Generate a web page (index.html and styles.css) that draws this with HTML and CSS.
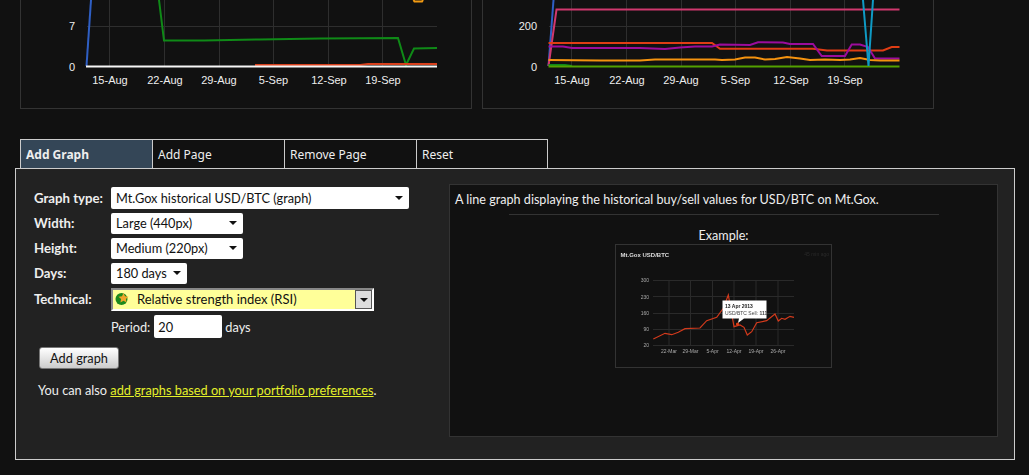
FILE: index.html
```html
<!DOCTYPE html>
<html lang="en">
<head>
    <meta charset="UTF-8">
    <title>Add Graph</title>
    <link rel="stylesheet" href="styles.css">
</head>
<body>
    <section class="graphs">
        <div class="graph">
            <svg viewBox="21 0 450 108" width="450" height="108">
                <g class="grid">
                    <path d="M87 26.5H437"/>
                    <path d="M109.5 0V66M164.5 0V66M219.5 0V66M273.5 0V66M328.5 0V66M382.5 0V66"/>
                </g>
                <path class="line" stroke="#2f5fc4" d="M86.5 66L91 0"/>
                <path class="line" stroke="#0f8a17" d="M159 0L164 40.5L204 40.5L260 39.5L320 38.5L398 38L406 65L414 48.5L437 48"/>
                <path class="line" stroke="#d8401c" d="M255 65H360L368 64H437"/>
                <path class="line" stroke="#f7f7f7" d="M86 66.5H437"/>
                <path class="line" stroke="#f29a12" d="M413.5 0L414.5 1.5H422L423 0"/>
                <g class="ticks">
                    <text x="72" y="30" text-anchor="middle">7</text>
                    <text x="72" y="71" text-anchor="middle">0</text>
                    <text x="110" y="84" text-anchor="middle">15-Aug</text>
                    <text x="165" y="84" text-anchor="middle">22-Aug</text>
                    <text x="219" y="84" text-anchor="middle">29-Aug</text>
                    <text x="273.5" y="84" text-anchor="middle">5-Sep</text>
                    <text x="329" y="84" text-anchor="middle">12-Sep</text>
                    <text x="383" y="84" text-anchor="middle">19-Sep</text>
                </g>
            </svg>
        </div>
        <div class="graph">
            <svg viewBox="483 0 450 108" width="450" height="108">
                <g class="grid">
                    <path d="M549 26.5H900"/>
                    <path d="M571.5 0V66M626.5 0V66M681.5 0V66M735.5 0V66M790.5 0V66M844.5 0V66"/>
                </g>
                <path class="line" stroke="#2f5fc4" d="M548.5 66L553.5 0"/>
                <path class="line" stroke="#d0386e" d="M548.5 66L556.5 9.5H899.5"/>
                <path class="line" stroke="#e03d14" d="M548.5 43H712L720 48.7H813L827 50.5H883L891.7 47H899.5"/>
                <path class="line" stroke="#9c0c9c" d="M548.5 46.5H563L572 48H640L665 49L680 47.5L695 46.5H712L720 44.5L750 45L758 42.3L783 42.5L790 44H813L821.7 56H845L851.7 44.5H860L868 47L875 58.5H899.5"/>
                <path class="line" stroke="#f5930f" d="M548.5 60L600 60.5H640L655 59.5H715L722 60L735 59.5L745 57.5H755L765 59.5L775 59L787 57L800 58.5L810 60L825 59.5L840 60L850 59.5L860 58L870 60L880 60.5H899.5"/>
                <path class="line" stroke="#0f8a17" d="M548.5 65H565L572 66"/>
                <path class="line" stroke="#53a000" d="M548.5 66.5H899.5"/>
                <path class="line" stroke="#0f9ac4" d="M863 0L868.5 66L873 0"/>
                <g class="ticks">
                    <text x="537" y="30" text-anchor="end">200</text>
                    <text x="537" y="71" text-anchor="end">0</text>
                    <text x="572" y="84" text-anchor="middle">15-Aug</text>
                    <text x="627" y="84" text-anchor="middle">22-Aug</text>
                    <text x="681" y="84" text-anchor="middle">29-Aug</text>
                    <text x="735.5" y="84" text-anchor="middle">5-Sep</text>
                    <text x="791" y="84" text-anchor="middle">12-Sep</text>
                    <text x="845" y="84" text-anchor="middle">19-Sep</text>
                </g>
            </svg>
        </div>
    </section>

    <nav class="tabs">
        <a class="tab tab-active" href="#">Add Graph</a>
        <a class="tab" href="#">Add Page</a>
        <a class="tab" href="#">Remove Page</a>
        <a class="tab tab-last" href="#">Reset</a>
    </nav>

    <section class="panel">
        <form class="graph-form">
            <div class="row row-first">
                <label class="row-label">Graph type:</label>
                <div class="select select-type">Mt.Gox historical USD/BTC (graph)</div>
            </div>
            <div class="row row-lift">
                <label class="row-label">Width:</label>
                <div class="select select-size">Large (440px)</div>
            </div>
            <div class="row row-lift">
                <label class="row-label">Height:</label>
                <div class="select select-size">Medium (220px)</div>
            </div>
            <div class="row row-lift">
                <label class="row-label">Days:</label>
                <div class="select select-days">180 days</div>
            </div>
            <div class="row row-tall row-lift">
                <label class="row-label">Technical:</label>
                <div class="combo">
                    <svg class="combo-icon" viewBox="0 0 14 14" width="14" height="14">
                        <circle cx="6.5" cy="7" r="6" fill="#1c8a1c"/>
                        <path d="M8.5 1L10 4.3L13.5 4.7L10.9 7L11.6 10.5L8.5 8.7L5.4 10.5L6.1 7L3.5 4.7L7 4.3Z" fill="#f0a52a"/>
                    </svg>
                    <span class="combo-text">Relative strength index (RSI)</span>
                    <span class="combo-button"></span>
                </div>
            </div>
            <div class="row row-tall row-period">
                <span class="period-label">Period:</span>
                <input class="period-input" type="text" value="20">
                <span>days</span>
            </div>
            <button class="add-button" type="button">Add graph</button>
            <p class="form-note">You can also <a href="#">add graphs based on your portfolio preferences</a>.</p>
        </form>

        <aside class="preview">
            <p class="preview-text">A line graph displaying the historical buy/sell values for USD/BTC on Mt.Gox.</p>
            <hr class="preview-rule">
            <p class="preview-label">Example:</p>
            <svg class="preview-graph" viewBox="615 244 217 124" width="217" height="124">
                <rect x="615.5" y="244.5" width="216" height="123" fill="#111" stroke="#333"/>
                <text class="thumb-title" x="620.5" y="257">Mt.Gox USD/BTC</text>
                <text class="thumb-age" x="829" y="256" text-anchor="end">45 min ago</text>
                <path class="thumb-grid" d="M653 280.5H794M653 296.5H794M653 313.5H794M653 329.5H794M653 345.5H794M669 280V346M690.5 280V346M712.5 280V346M734 280V346M756 280V346M778 280V346"/>
                <g class="thumb-ticks">
                    <text x="649" y="282" text-anchor="end">300</text>
                    <text x="649" y="299" text-anchor="end">230</text>
                    <text x="649" y="315" text-anchor="end">160</text>
                    <text x="649" y="331" text-anchor="end">90</text>
                    <text x="649" y="347" text-anchor="end">20</text>
                    <text x="669" y="353" text-anchor="middle">22-Mar</text>
                    <text x="690.5" y="353" text-anchor="middle">29-Mar</text>
                    <text x="712.5" y="353" text-anchor="middle">5-Apr</text>
                    <text x="734" y="353" text-anchor="middle">12-Apr</text>
                    <text x="756" y="353" text-anchor="middle">19-Apr</text>
                    <text x="778" y="353" text-anchor="middle">26-Apr</text>
                </g>
                <path class="thumb-line" d="M653.3 339L665 333.3L671.7 334.7L678.3 332.3L685 328.7L700 328L706.7 320.7L716.7 317.3L723.3 308.3L728.3 295L734 326.7L740 325L744 327.3L747.3 335L751.7 331.7L756.7 322.7L766.7 320.7L775 314L778.3 321L781.7 318.3L785 319.3L790 316.3L794 317.3"/>
                <path d="M722.5 300.5H766.5V318.5H744L738 323L739 318.5H722.5Z" fill="#fff"/>
                <circle cx="737.5" cy="324" r="1.6" fill="#e03d14"/>
                <text class="thumb-tip-bold" x="725" y="307.5">13 Apr 2013</text>
                <text class="thumb-tip" x="725" y="314.5">USD/BTC Sell: <tspan font-weight="bold">111</tspan></text>
            </svg>
        </aside>
    </section>
</body>
</html>
```

FILE: styles.css
```css
body {
    margin: 0;
    background: #111;
    color: #eee;
    font-family: Lato, "Open Sans", sans-serif;
    font-size: 12.6px;
}

/* graphs at the top, cut by the scroll position */
.graphs {
    display: flex;
    gap: 10px;
    padding-left: 20px;
    height: 109px;
    margin-bottom: 30px;
}

.graph {
    width: 450px;
    height: 108px;
    border: 1px solid #333;
    border-top: 0;
}

.graph svg {
    display: block;
}

.grid path {
    fill: none;
    stroke: #2e2e2e;
}

.line {
    fill: none;
    stroke-width: 2;
}

.ticks text {
    font-family: "Liberation Sans", sans-serif;
    font-size: 11px;
    fill: #eee;
}

/* tabs */
.tabs {
    display: flex;
    margin-left: 20px;
}

.tab {
    display: block;
    box-sizing: border-box;
    width: 132px;
    height: 29px;
    padding: 6px 0 0 5px;
    border: 1px solid #ccc;
    border-width: 1px 0 0 1px;
    color: #eee;
    font-family: "Noto Sans", sans-serif;
    font-size: 12px;
    text-decoration: none;
}

.tab-active {
    background: #344657;
    font-weight: bold;
}

.tab-last {
    border-right-width: 1px;
}

/* main panel */
.panel {
    display: flex;
    justify-content: space-between;
    box-sizing: border-box;
    width: 1000px;
    height: 292px;
    margin-left: 15px;
    padding: 15px 15px 0 18px;
    border: 1px solid #ccc;
    background: #222;
}

.graph-form {
    padding-top: 3px;
    font-size: 12.75px;
}

.row {
    display: flex;
    align-items: center;
    height: 21px;
    margin-bottom: 4px;
}

.row-first {
    height: 22px;
}

.row-tall {
    height: 23px;
}

.row-label {
    width: 77px;
    font-size: 13.2px;
    font-weight: bold;
}

/* these rows sit one pixel high in the original */
.row-lift .row-label {
    margin-bottom: 2px;
}

.row-lift .select,
.row-lift .combo {
    padding-bottom: 2px;
}

.select {
    display: flex;
    align-items: center;
    justify-content: space-between;
    box-sizing: border-box;
    height: 100%;
    padding: 0 5px;
    border-radius: 2px;
    background: #fff;
    color: #111;
}

.select::after {
    content: "";
    border: 4px solid transparent;
    border-top: 4px solid #111;
    border-bottom: 0;
    margin-right: 1px;
}

.select-type {
    width: 298px;
}

.select-size {
    width: 132px;
}

.select-days {
    width: 76px;
}

.combo {
    display: flex;
    align-items: center;
    box-sizing: border-box;
    width: 263px;
    height: 100%;
    padding-left: 2px;
    border: 2px solid #888;
    border-right-color: #fff;
    border-bottom-color: #fff;
    background: #ff9;
    color: #111;
}

.combo-icon {
    margin-right: 8px;
}

.combo-text {
    flex: 1;
    font-size: 13px;
}

.combo-button {
    display: flex;
    align-items: center;
    justify-content: center;
    width: 15px;
    height: 17px;
    margin-bottom: -2px;
    border: 1px solid #555;
    background: #ddd;
}

.combo-button::after {
    content: "";
    border: 4px solid transparent;
    border-top: 4px solid #111;
    border-bottom: 0;
}

.row-period {
    margin-left: 77px;
    gap: 3px;
}

.period-label {
    margin-right: 1px;
}

.period-input {
    box-sizing: border-box;
    width: 68px;
    height: 23px;
    padding: 0 4px;
    border: 0;
    border-radius: 2px;
    background: #fff;
    color: #111;
    font: inherit;
}

.add-button {
    display: block;
    width: 80px;
    height: 22px;
    margin: 9px 0 0 5px;
    padding: 0;
    border: 1px solid #777;
    border-radius: 3px;
    background: linear-gradient(#fff, #ccc);
    color: #111;
    font: inherit;
}

.form-note {
    margin: 13px 0 0 4px;
}

.form-note a {
    color: #e4f02a;
}

/* description box */
.preview {
    display: flex;
    flex-direction: column;
    align-items: center;
    box-sizing: border-box;
    width: 549px;
    height: 253px;
    margin-right: 1px;
    padding-top: 7px;
    border: 1px solid #333;
    background: #111;
}

.preview-text {
    align-self: flex-start;
    margin: 0 0 0 5px;
    line-height: 16px;
}

.preview-rule {
    width: 430px;
    height: 1px;
    margin: 6px 0 13px;
    border: 0;
    background: #333;
}

.preview-label {
    margin: 0 0 1px;
    line-height: 15px;
}

.preview-graph {
    display: block;
    filter: blur(0.3px);
}

.thumb-title {
    font: bold 6px "Liberation Sans", sans-serif;
    fill: #ddd;
}

.thumb-age {
    font: 5px "Liberation Sans", sans-serif;
    fill: #2a2a2a;
}

.thumb-grid {
    fill: none;
    stroke: #2a2a2a;
}

.thumb-ticks text {
    font: 5px "Liberation Sans", sans-serif;
    fill: #aaa;
}

.thumb-line {
    fill: none;
    stroke: #d23a1c;
    stroke-width: 1.2;
}

.thumb-tip-bold {
    font: bold 5px "Liberation Sans", sans-serif;
    fill: #222;
}

.thumb-tip {
    font: 5px "Liberation Sans", sans-serif;
    fill: #444;
}
```
